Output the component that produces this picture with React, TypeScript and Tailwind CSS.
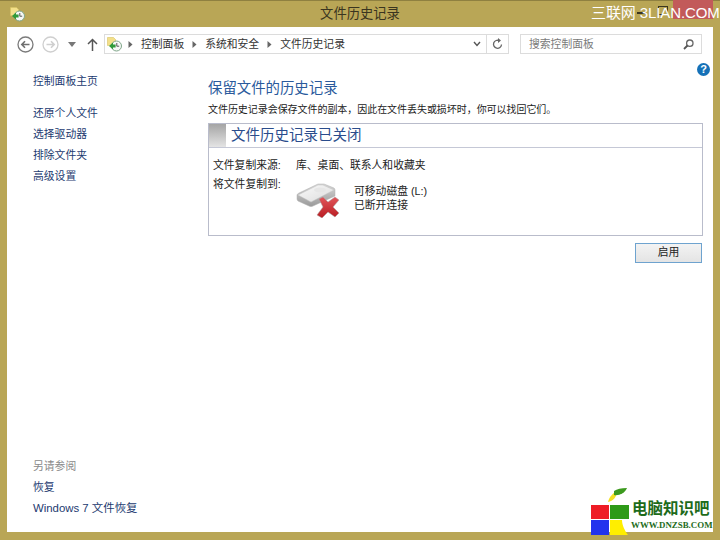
const font = "font-['Liberation_Sans','Noto_Sans_CJK_SC',sans-serif]";

const HistoryIcon = () => (
  <svg width="15" height="15" viewBox="0 0 15 15">
    <path d="M0.5 0.5h6l2 2v6h-8z" fill="#f3e08a" stroke="#d8c263" strokeWidth="0.6" />
    <circle cx="9.5" cy="9" r="5" fill="#f6f8f6" stroke="#7fa589" strokeWidth="1" />
    <path d="M9.8 6v3.2h2.4" fill="none" stroke="#444" strokeWidth="0.9" />
    <path d="M2 9 6 5.6v2h2.6v2.8H6v2z" fill="#2f9a3a" />
  </svg>
);

const CircleArrow = ({ dir, dim }: { dir: "left" | "right"; dim?: boolean }) => (
  <svg width="17" height="17" viewBox="0 0 17 17">
    <circle cx="8.5" cy="8.5" r="7.5" fill="#fff" stroke={dim ? "#cfcfcf" : "#7b7b7b"} strokeWidth="1.3" />
    <path
      d={dir === "left" ? "M12.5 8.5H5M8 5.2 4.8 8.5 8 11.8" : "M4.5 8.5H12M9 5.2l3.2 3.3L9 11.8"}
      fill="none"
      stroke={dim ? "#cfcfcf" : "#6f6f6f"}
      strokeWidth="1.6"
    />
  </svg>
);

const Crumb = () => (
  <svg width="5" height="7" viewBox="0 0 5 7">
    <path d="M0.5 0 4.5 3.5 0.5 7z" fill="#666" />
  </svg>
);

const DriveIcon = () => (
  <svg width="44" height="35" viewBox="0 0 44 35">
    <defs>
      <linearGradient id="top" x1="0" y1="0" x2="1" y2="1">
        <stop offset="0" stopColor="#fafafa" />
        <stop offset="1" stopColor="#dcdcdc" />
      </linearGradient>
      <linearGradient id="side" x1="0" y1="0" x2="0" y2="1">
        <stop offset="0" stopColor="#d6d6d6" />
        <stop offset="1" stopColor="#9a9a9a" />
      </linearGradient>
      <linearGradient id="cross" x1="0" y1="0" x2="0" y2="1">
        <stop offset="0" stopColor="#e2555a" />
        <stop offset="1" stopColor="#b81c22" />
      </linearGradient>
    </defs>
    <path d="M1 12Q1 11 3 10L22 1h6l10 4q1 1 1 2v6L17 23q-2 1-4 0L2 18q-1-1-1-2z" fill="url(#side)" stroke="#b0b0b0" strokeWidth="0.5" />
    <path d="M2 12 22 2h5l11 5-23 12z" fill="url(#top)" stroke="#c4c4c4" strokeWidth="0.5" />
    <ellipse cx="24" cy="7" rx="6" ry="2.5" fill="#e6e6e6" />
    <path
      d="M23 16l4-2 5 5 7-5 4 3-6 7 6 6-4 4-7-5-6 6-5-3 6-8z"
      fill="url(#cross)"
      stroke="#a8a4a4"
      strokeWidth="0.5"
    />
  </svg>
);

const Logo = () => (
  <svg width="42" height="47" viewBox="0 0 42 47" className="shrink-0">
    <path d="M18 14c1-5 5-9 9-11 0 6-4 10-9 11z" fill="#f4e225" />
    <path d="M24 3c3-2 7-3 13-3-2 5-8 8-13 7z" fill="#3c9a1e" />
    <rect x="1" y="17" width="18" height="14" fill="#ee1c25" />
    <rect x="20" y="17" width="19" height="14" fill="#2e9a18" />
    <rect x="1" y="32" width="18" height="15" fill="#2233ee" />
    <path d="M20 32h12c0 5 3 11 6 15H20z" fill="#ffee00" />
  </svg>
);

const SideLink = ({ children }: { children: string }) => (
  <a className="block text-[10.8px] leading-[15px] text-[#1c3a70]">{children}</a>
);

export default function App() {
  return (
    <div className={`${font} relative flex h-[540px] w-[720px] flex-col overflow-hidden bg-[#b9a656]`}>
      {/* title bar */}
      <div className="relative flex h-[27px] shrink-0 items-center justify-center border-t border-[#8f8040]">
        <div className="absolute left-[10px] top-[6px]">
          <HistoryIcon />
        </div>
        <span className="text-[13.3px] text-[#3a3520]">文件历史记录</span>
      </div>

      {/* window body */}
      <div className="mx-[7px] mb-[8px] flex min-h-0 flex-1 flex-col bg-white">
        {/* toolbar */}
        <div className="flex h-[27px] shrink-0 items-end">
          <div className="ml-[10px] flex h-[20px] w-[87px] items-center">
            <CircleArrow dir="left" />
            <span className="ml-[8px]">
              <CircleArrow dir="right" dim />
            </span>
            <svg width="8" height="5" viewBox="0 0 8 5" className="ml-[9px]">
              <path d="M0 0h8L4 5z" fill="#777" />
            </svg>
            <svg width="11" height="13" viewBox="0 0 11 13" className="ml-[11px]">
              <path d="M5.5 13V2M1 6l4.5-4.5L10 6" fill="none" stroke="#555" strokeWidth="1.5" />
            </svg>
          </div>
          <div className="flex h-[20px] w-[405px] items-center border border-[#dcdcdc]">
            <div className="ml-[2px]">
              <HistoryIcon />
            </div>
            <div className="ml-[6px] flex flex-1 items-center gap-[8px] text-[10.8px] text-[#333]">
              <Crumb />
              <span>控制面板</span>
              <Crumb />
              <span>系统和安全</span>
              <Crumb />
              <span>文件历史记录</span>
            </div>
            <svg width="8" height="6" viewBox="0 0 8 6" className="mr-[5px]">
              <path d="M1 1l3 3.4L7 1" fill="none" stroke="#555" strokeWidth="1.4" />
            </svg>
            <div className="flex h-full w-[22px] items-center justify-center border-l border-[#dcdcdc]">
              <svg width="11" height="12" viewBox="0 0 11 12">
                <path d="M9.5 6.5a4 4 0 1 1-2-3.7" fill="none" stroke="#666" strokeWidth="1.3" />
                <path d="M6 0v5l3-2.6z" fill="#666" />
              </svg>
            </div>
          </div>
          <div className="ml-[11px] flex h-[20px] w-[182px] items-center justify-between border border-[#dcdcdc] pl-[8px] pr-[7px]">
            <span className="text-[10.8px] text-[#7a7a7a]">搜索控制面板</span>
            <svg width="11" height="11" viewBox="0 0 11 11">
              <circle cx="6.8" cy="4.2" r="3.2" fill="none" stroke="#666" strokeWidth="1.3" />
              <path d="M4.5 6.5 1 10" stroke="#555" strokeWidth="1.8" />
            </svg>
          </div>
        </div>

        {/* content */}
        <div className="relative flex min-h-0 flex-1">
          <div className="absolute right-[3px] top-[9px] flex h-[13px] w-[13px] items-center justify-center rounded-full bg-[#1571b8] text-[11px] font-bold leading-none text-white">
            ?
          </div>

          <nav className="flex w-[201px] shrink-0 flex-col pl-[26px] pt-[20px]">
            <SideLink>控制面板主页</SideLink>
            <div className="mt-[17px] flex flex-col gap-[6px]">
              <SideLink>还原个人文件</SideLink>
              <SideLink>选择驱动器</SideLink>
              <SideLink>排除文件夹</SideLink>
              <SideLink>高级设置</SideLink>
            </div>
            <div className="mt-auto flex flex-col gap-[6px] pb-[16px]">
              <span className="text-[10.8px] leading-[15px] text-[#8a8a8a]">另请参阅</span>
              <SideLink>恢复</SideLink>
              <a className="block text-[11.4px] leading-[15px] text-[#1c3a70]">Windows 7 文件恢复</a>
            </div>
          </nav>

          <main className="w-[495px] pt-[24px]">
            <h1 className="text-[14.4px] font-normal leading-[20px] text-[#2a5a9c]">保留文件的历史记录</h1>
            <p className="mt-[4px] text-[10px] leading-[16px] tracking-[-0.05px] text-[#222]">
              文件历史记录会保存文件的副本，因此在文件丢失或损坏时，你可以找回它们。
            </p>
            <section className="mt-[5px] h-[113px] border border-[#b9bccb]">
              <div className="flex h-[24px] items-stretch border-b border-[#c5c8d6]">
                <div className="w-[17px] bg-gradient-to-b from-[#a5a5a5] to-[#e4e4e4]" />
                <h2 className="ml-[5px] text-[14.5px] font-normal leading-[22px] text-[#2a4c8c]">
                  文件历史记录已关闭
                </h2>
              </div>
              <div className="mt-[10px] flex pl-[4px] text-[10.8px] leading-[14px] text-[#222]">
                <div className="flex w-[83px] flex-col gap-[5px]">
                  <span>文件复制来源:</span>
                  <span>将文件复制到:</span>
                </div>
                <div className="flex flex-col">
                  <span>库、桌面、联系人和收藏夹</span>
                  <div className="mt-[11px] flex">
                    <DriveIcon />
                    <div className="ml-[14px] mt-[1px] flex flex-col">
                      <span>可移动磁盘 (L:)</span>
                      <span>已断开连接</span>
                    </div>
                  </div>
                </div>
              </div>
            </section>
            <div className="mt-[7px] flex justify-end pr-[1px]">
              <button className="h-[20px] w-[67px] border border-[#6ea3cf] bg-gradient-to-b from-[#f3f3f3] to-[#e4e4e4] pb-[1px] text-[10.8px] text-[#222]">
                启用
              </button>
            </div>
          </main>
        </div>
      </div>

      {/* overlays: window controls showing through, site watermark and logo stamped on the screenshot */}
      <div className="absolute left-[673px] top-[0px] h-[19px] w-[40px] bg-[#c25a5a]" />
      <div className="absolute left-[637px] top-[12px] h-[2px] w-[9px] bg-[#3a3520]" />
      <div className="absolute left-[658px] top-[6px] h-[9px] w-[10px] border border-[#3a3520]" />
      <span className="absolute left-[591px] top-[4px] text-[15px] leading-[18px] tracking-[-0.1px] text-white">三联网 3LIAN.COM</span>
      <div className="absolute left-[590px] top-[488px]">
        <Logo />
      </div>
      <span className="absolute left-[632px] top-[499px] text-[15.5px] font-bold leading-[19px] text-[#1d6b1a]">电脑知识吧</span>
      <span className="absolute left-[631px] top-[519px] font-['Liberation_Serif'] text-[8.9px] font-bold leading-[12px] text-[#1d6b1a]">
        WWW.DNZSB.COM
      </span>
    </div>
  );
}
